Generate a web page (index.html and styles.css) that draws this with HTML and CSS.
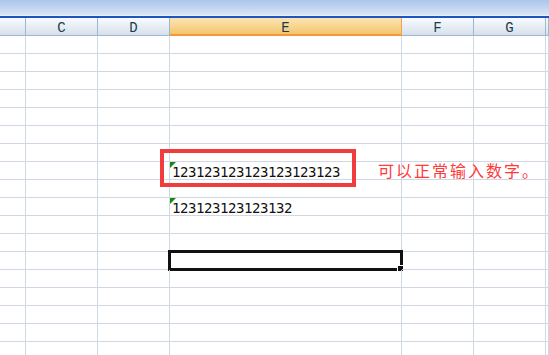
FILE: index.html
```html
<!DOCTYPE html>
<html lang="zh-CN">
<head>
  <meta charset="UTF-8">
  <meta name="viewport" content="width=device-width, initial-scale=1.0">
  <title>Sheet1</title>
  <link rel="stylesheet" href="styles.css">
</head>
<body>
  <div class="page">
    <div class="ribbon"></div>
    <div class="sheet" id="sheet">
      <div class="col-head"></div>
      <div class="col-head">C</div>
      <div class="col-head">D</div>
      <div class="col-head active">E</div>
      <div class="col-head">F</div>
      <div class="col-head">G</div>
      <div class="col-head"></div>
    </div>

    <!-- annotation drawn over the sheet -->
    <div class="mark-box"></div>
    <div class="mark-text">可以正常输入数字。</div>
  </div>

  <script>
    // row -> value in column E (stored as text, so it gets the green flag)
    const values = {
      8: '123123123123123123123',
      10: '123123123123132'
    };
    const selectedRow = 13;
    const sheet = document.getElementById('sheet');

    for (let r = 1; r <= 18; r++) {
      for (let c = 0; c < 7; c++) {
        const cell = document.createElement('div');
        cell.className = 'cell';
        if (c === 3 && values[r]) {
          cell.classList.add('text-num');
          cell.textContent = values[r];
        }
        if (c === 3 && r === selectedRow) {
          const sel = document.createElement('div');
          sel.className = 'selection';
          cell.appendChild(sel);
        }
        sheet.appendChild(cell);
      }
    }
  </script>
</body>
</html>
```

FILE: styles.css
```css
body {
  margin: 0;
  background: #fff;
  overflow: hidden;
}
.page {
  position: relative;
  width: 549px;
  height: 355px;
  overflow: hidden;
}
.ribbon {
  height: 16px;
  background: linear-gradient(#aac5eb, #d8e5f7 15px, #eaf1fb 15px);
  border-bottom: 2px solid #1f55c0;
}
.sheet {
  display: grid;
  grid-template-columns: 26px 72px 72px 232px 72px 72px 1fr;
  grid-auto-rows: 18px;
}
.col-head {
  box-sizing: border-box;
  height: 18px;
  border-right: 1px solid #9eb6ce;
  border-bottom: 1px solid #9eb6ce;
  background: linear-gradient(#f9fbfd, #e4ebf3 60%, #d6e0ec);
  font-family: "Liberation Mono", monospace;
  font-size: 14px;
  line-height: 17px;
  padding-top: 2px;
  text-align: center;
  color: #1e3a4f;
}
.col-head.active {
  background: linear-gradient(#fbe4b0, #f8d693 50%, #f3c46c);
  border-right-color: #f0a24a;
  border-bottom: 2px solid #f29a38;
}
.cell {
  position: relative;
  box-sizing: border-box;
  height: 18px;
  border-right: 1px solid #d0d7e5;
  border-bottom: 1px solid #d0d7e5;
}
.text-num {
  font-family: "DejaVu Sans Mono", monospace;
  font-size: 14px;
  letter-spacing: -0.43px;
  line-height: 18px;
  padding: 1px 0 0 2px;
  white-space: nowrap;
  color: #111;
}
.text-num::before {
  content: "";
  position: absolute;
  left: 0;
  top: 0;
  border-top: 6px solid #138a13;
  border-right: 6px solid transparent;
}
.selection {
  position: absolute;
  left: -2px;
  top: -2px;
  width: 235px;
  height: 21px;
  box-sizing: border-box;
  border: 3px solid #111;
}
.selection::after {
  content: "";
  position: absolute;
  right: -4px;
  bottom: -4px;
  width: 5px;
  height: 5px;
  background: #111;
  border: 1px solid #fff;
}
.mark-box {
  position: absolute;
  left: 160px;
  top: 149px;
  width: 196px;
  height: 38px;
  box-sizing: border-box;
  border: 4px solid #f03c3c;
}
.mark-text {
  position: absolute;
  left: 378px;
  top: 160px;
  font-family: "Noto Sans CJK SC", sans-serif;
  font-size: 16px;
  letter-spacing: 2px;
  line-height: 20px;
  color: #ff3838;
  white-space: nowrap;
}
```
